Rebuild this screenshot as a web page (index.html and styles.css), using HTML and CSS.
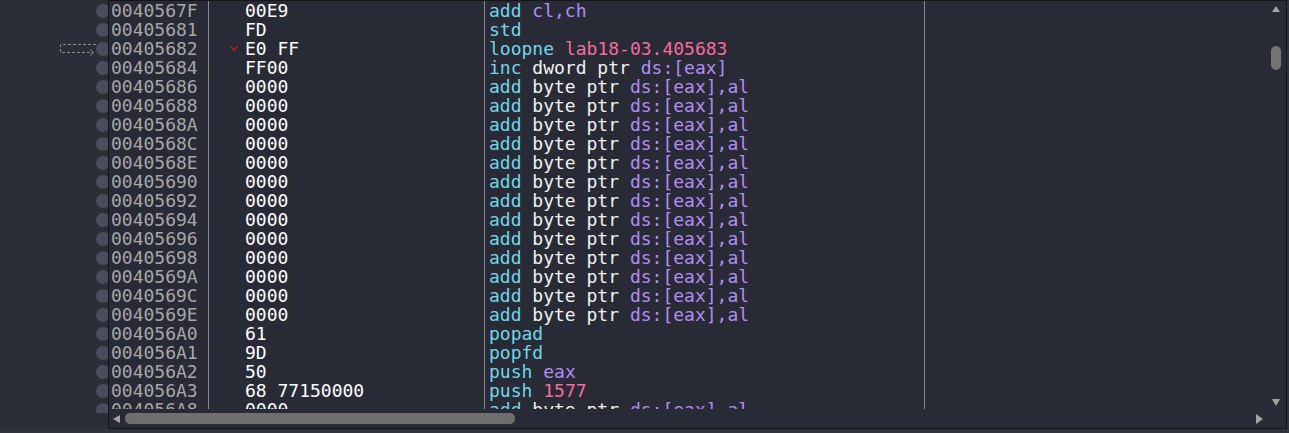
FILE: index.html
```html
<!DOCTYPE html>
<html lang="en">

<head>
    <meta charset="UTF-8">
    <meta name="viewport" content="width=device-width, initial-scale=1.0">
    <title>Disassembly</title>
    <link rel="stylesheet" href="styles.css">
</head>

<body>
    <div class="window">
        <div class="gutter">
            <div class="gutter-rows">
                <div class="gutter-row"><span class="bp"></span></div>
                <div class="gutter-row"><span class="bp"></span></div>
                <div class="gutter-row">
                    <svg class="jump-arrow" width="36" height="19" viewBox="0 0 36 19">
                        <path d="M36 5.5 H0.5 V13.5 H33" fill="none" stroke="#8c8c8c" stroke-dasharray="3 2" />
                        <path d="M30 10.5 L33.5 13.5 L30 16.5" fill="none" stroke="#8c8c8c" />
                    </svg>
                    <span class="bp"></span>
                </div>
                <div class="gutter-row"><span class="bp"></span></div>
                <div class="gutter-row"><span class="bp"></span></div>
                <div class="gutter-row"><span class="bp"></span></div>
                <div class="gutter-row"><span class="bp"></span></div>
                <div class="gutter-row"><span class="bp"></span></div>
                <div class="gutter-row"><span class="bp"></span></div>
                <div class="gutter-row"><span class="bp"></span></div>
                <div class="gutter-row"><span class="bp"></span></div>
                <div class="gutter-row"><span class="bp"></span></div>
                <div class="gutter-row"><span class="bp"></span></div>
                <div class="gutter-row"><span class="bp"></span></div>
                <div class="gutter-row"><span class="bp"></span></div>
                <div class="gutter-row"><span class="bp"></span></div>
                <div class="gutter-row"><span class="bp"></span></div>
                <div class="gutter-row"><span class="bp"></span></div>
                <div class="gutter-row"><span class="bp"></span></div>
                <div class="gutter-row"><span class="bp"></span></div>
                <div class="gutter-row"><span class="bp"></span></div>
                <div class="gutter-row"><span class="bp"></span></div>
            </div>
        </div>

        <div class="pane">
            <div class="view">
                <div class="listing">
                    <div class="row">
                        <span class="addr">0040567F</span>
                        <span class="bytes">00E9</span>
                        <span class="asm"><span class="mn">add</span> <span class="reg">cl,ch</span></span>
                        <span class="comment"></span>
                    </div>
                    <div class="row">
                        <span class="addr">00405681</span>
                        <span class="bytes">FD</span>
                        <span class="asm"><span class="mn">std</span></span>
                        <span class="comment"></span>
                    </div>
                    <div class="row">
                        <span class="addr">00405682</span>
                        <span class="bytes"><svg class="jump-mark" width="8" height="5" viewBox="0 0 8 5"><path d="M0.5 0.5 L4 4 L7.5 0.5" fill="none" stroke="#d0182e" stroke-width="1.3" /></svg>E0 FF</span>
                        <span class="asm"><span class="mn">loopne</span> <span class="addr-ref">lab18-03.405683</span></span>
                        <span class="comment"></span>
                    </div>
                    <div class="row">
                        <span class="addr">00405684</span>
                        <span class="bytes">FF00</span>
                        <span class="asm"><span class="mn">inc</span> dword ptr <span class="reg">ds:[eax]</span></span>
                        <span class="comment"></span>
                    </div>
                    <div class="row">
                        <span class="addr">00405686</span>
                        <span class="bytes">0000</span>
                        <span class="asm"><span class="mn">add</span> byte ptr <span class="reg">ds:[eax],al</span></span>
                        <span class="comment"></span>
                    </div>
                    <div class="row">
                        <span class="addr">00405688</span>
                        <span class="bytes">0000</span>
                        <span class="asm"><span class="mn">add</span> byte ptr <span class="reg">ds:[eax],al</span></span>
                        <span class="comment"></span>
                    </div>
                    <div class="row">
                        <span class="addr">0040568A</span>
                        <span class="bytes">0000</span>
                        <span class="asm"><span class="mn">add</span> byte ptr <span class="reg">ds:[eax],al</span></span>
                        <span class="comment"></span>
                    </div>
                    <div class="row">
                        <span class="addr">0040568C</span>
                        <span class="bytes">0000</span>
                        <span class="asm"><span class="mn">add</span> byte ptr <span class="reg">ds:[eax],al</span></span>
                        <span class="comment"></span>
                    </div>
                    <div class="row">
                        <span class="addr">0040568E</span>
                        <span class="bytes">0000</span>
                        <span class="asm"><span class="mn">add</span> byte ptr <span class="reg">ds:[eax],al</span></span>
                        <span class="comment"></span>
                    </div>
                    <div class="row">
                        <span class="addr">00405690</span>
                        <span class="bytes">0000</span>
                        <span class="asm"><span class="mn">add</span> byte ptr <span class="reg">ds:[eax],al</span></span>
                        <span class="comment"></span>
                    </div>
                    <div class="row">
                        <span class="addr">00405692</span>
                        <span class="bytes">0000</span>
                        <span class="asm"><span class="mn">add</span> byte ptr <span class="reg">ds:[eax],al</span></span>
                        <span class="comment"></span>
                    </div>
                    <div class="row">
                        <span class="addr">00405694</span>
                        <span class="bytes">0000</span>
                        <span class="asm"><span class="mn">add</span> byte ptr <span class="reg">ds:[eax],al</span></span>
                        <span class="comment"></span>
                    </div>
                    <div class="row">
                        <span class="addr">00405696</span>
                        <span class="bytes">0000</span>
                        <span class="asm"><span class="mn">add</span> byte ptr <span class="reg">ds:[eax],al</span></span>
                        <span class="comment"></span>
                    </div>
                    <div class="row">
                        <span class="addr">00405698</span>
                        <span class="bytes">0000</span>
                        <span class="asm"><span class="mn">add</span> byte ptr <span class="reg">ds:[eax],al</span></span>
                        <span class="comment"></span>
                    </div>
                    <div class="row">
                        <span class="addr">0040569A</span>
                        <span class="bytes">0000</span>
                        <span class="asm"><span class="mn">add</span> byte ptr <span class="reg">ds:[eax],al</span></span>
                        <span class="comment"></span>
                    </div>
                    <div class="row">
                        <span class="addr">0040569C</span>
                        <span class="bytes">0000</span>
                        <span class="asm"><span class="mn">add</span> byte ptr <span class="reg">ds:[eax],al</span></span>
                        <span class="comment"></span>
                    </div>
                    <div class="row">
                        <span class="addr">0040569E</span>
                        <span class="bytes">0000</span>
                        <span class="asm"><span class="mn">add</span> byte ptr <span class="reg">ds:[eax],al</span></span>
                        <span class="comment"></span>
                    </div>
                    <div class="row">
                        <span class="addr">004056A0</span>
                        <span class="bytes">61</span>
                        <span class="asm"><span class="mn">popad</span></span>
                        <span class="comment"></span>
                    </div>
                    <div class="row">
                        <span class="addr">004056A1</span>
                        <span class="bytes">9D</span>
                        <span class="asm"><span class="mn">popfd</span></span>
                        <span class="comment"></span>
                    </div>
                    <div class="row">
                        <span class="addr">004056A2</span>
                        <span class="bytes">50</span>
                        <span class="asm"><span class="mn">push</span> <span class="reg">eax</span></span>
                        <span class="comment"></span>
                    </div>
                    <div class="row">
                        <span class="addr">004056A3</span>
                        <span class="bytes">68 77150000</span>
                        <span class="asm"><span class="mn">push</span> <span class="addr-ref">1577</span></span>
                        <span class="comment"></span>
                    </div>
                    <div class="row">
                        <span class="addr">004056A8</span>
                        <span class="bytes">0000</span>
                        <span class="asm"><span class="mn">add</span> byte ptr <span class="reg">ds:[eax],al</span></span>
                        <span class="comment"></span>
                    </div>
                </div>

                <div class="vscroll">
                    <span class="arrow-up"></span>
                    <span class="vthumb"></span>
                    <span class="arrow-down"></span>
                </div>
            </div>

            <div class="hscroll-bar">
                <div class="hscroll">
                    <span class="arrow-left"></span>
                    <span class="hthumb"></span>
                    <span class="arrow-right"></span>
                </div>
                <div class="corner"></div>
            </div>
        </div>
    </div>
</body>

</html>
```

FILE: styles.css
```css
body {
    margin: 0;
    background-color: #30323d;
    font-family: "DejaVu Sans Mono", "Liberation Mono", monospace;
    font-size: 18px;
    overflow: hidden;
}

.window {
    display: flex;
    height: 429px;
}

/* breakpoint gutter */
.gutter {
    width: 108px;
    flex: none;
    background-color: #2b2d38;
    overflow: hidden;
}

.gutter-rows {
    padding-top: 1px;
    height: 412px;
    overflow: hidden;
}

.gutter-row {
    height: 19px;
    display: flex;
    justify-content: flex-end;
    align-items: center;
    margin-right: -2px;
}

.jump-arrow {
    display: block;
}

.bp {
    width: 14px;
    height: 14px;
    border-radius: 50%;
    background-color: #4b4d5c;
}

/* main pane */
.pane {
    width: 1177px;
    flex: none;
    border: 1px solid #141519;
    background-color: #282a36;
    display: flex;
    flex-direction: column;
}

.view {
    display: flex;
    height: 408px;
}

.listing {
    width: 1157px;
    height: 408px;
    overflow: hidden;
}

.row {
    display: grid;
    grid-template-columns: 99px 276px 440px 342px;
    height: 19px;
    line-height: 19px;
    white-space: pre;
}

.addr {
    padding-left: 2px;
    color: #a7a7a7;
}

.bytes,
.asm,
.comment {
    border-left: 1px solid #8a8a8a;
}

.bytes {
    position: relative;
    padding-left: 36px;
    color: #ffffff;
}

.jump-mark {
    position: absolute;
    left: 21px;
    top: 7px;
}

.asm {
    padding-left: 4px;
    color: #f2f2f2;
}

.mn {
    color: #72d6e9;
}

.reg {
    color: #b38df2;
}

.addr-ref {
    color: #f56d9e;
}

/* scrollbars */
.vscroll {
    width: 20px;
    display: flex;
    flex-direction: column;
    align-items: center;
    padding-top: 5px;
}

.arrow-up {
    width: 0;
    height: 0;
    border-left: 4px solid transparent;
    border-right: 4px solid transparent;
    border-bottom: 6px solid #a3a3a3;
}

.vthumb {
    width: 10px;
    height: 24px;
    margin-top: 34px;
    border-radius: 5px;
    background-color: #737373;
}

.arrow-down {
    width: 0;
    height: 0;
    margin-top: auto;
    margin-bottom: 3px;
    border-left: 4px solid transparent;
    border-right: 4px solid transparent;
    border-top: 7px solid #a3a3a3;
}

.hscroll-bar {
    display: flex;
    height: 19px;
}

.hscroll {
    width: 1157px;
    display: flex;
    align-items: center;
    padding: 0 3px 0 4px;
    box-sizing: border-box;
}

.arrow-left {
    width: 0;
    height: 0;
    border-top: 4px solid transparent;
    border-bottom: 4px solid transparent;
    border-right: 7px solid #a3a3a3;
}

.hthumb {
    width: 390px;
    height: 11px;
    margin-left: 5px;
    border-radius: 5px;
    background-color: #6f6f6f;
}

.arrow-right {
    width: 0;
    height: 0;
    margin-left: auto;
    border-top: 5px solid transparent;
    border-bottom: 5px solid transparent;
    border-left: 7px solid #a3a3a3;
}

.corner {
    flex: 1;
}
```
